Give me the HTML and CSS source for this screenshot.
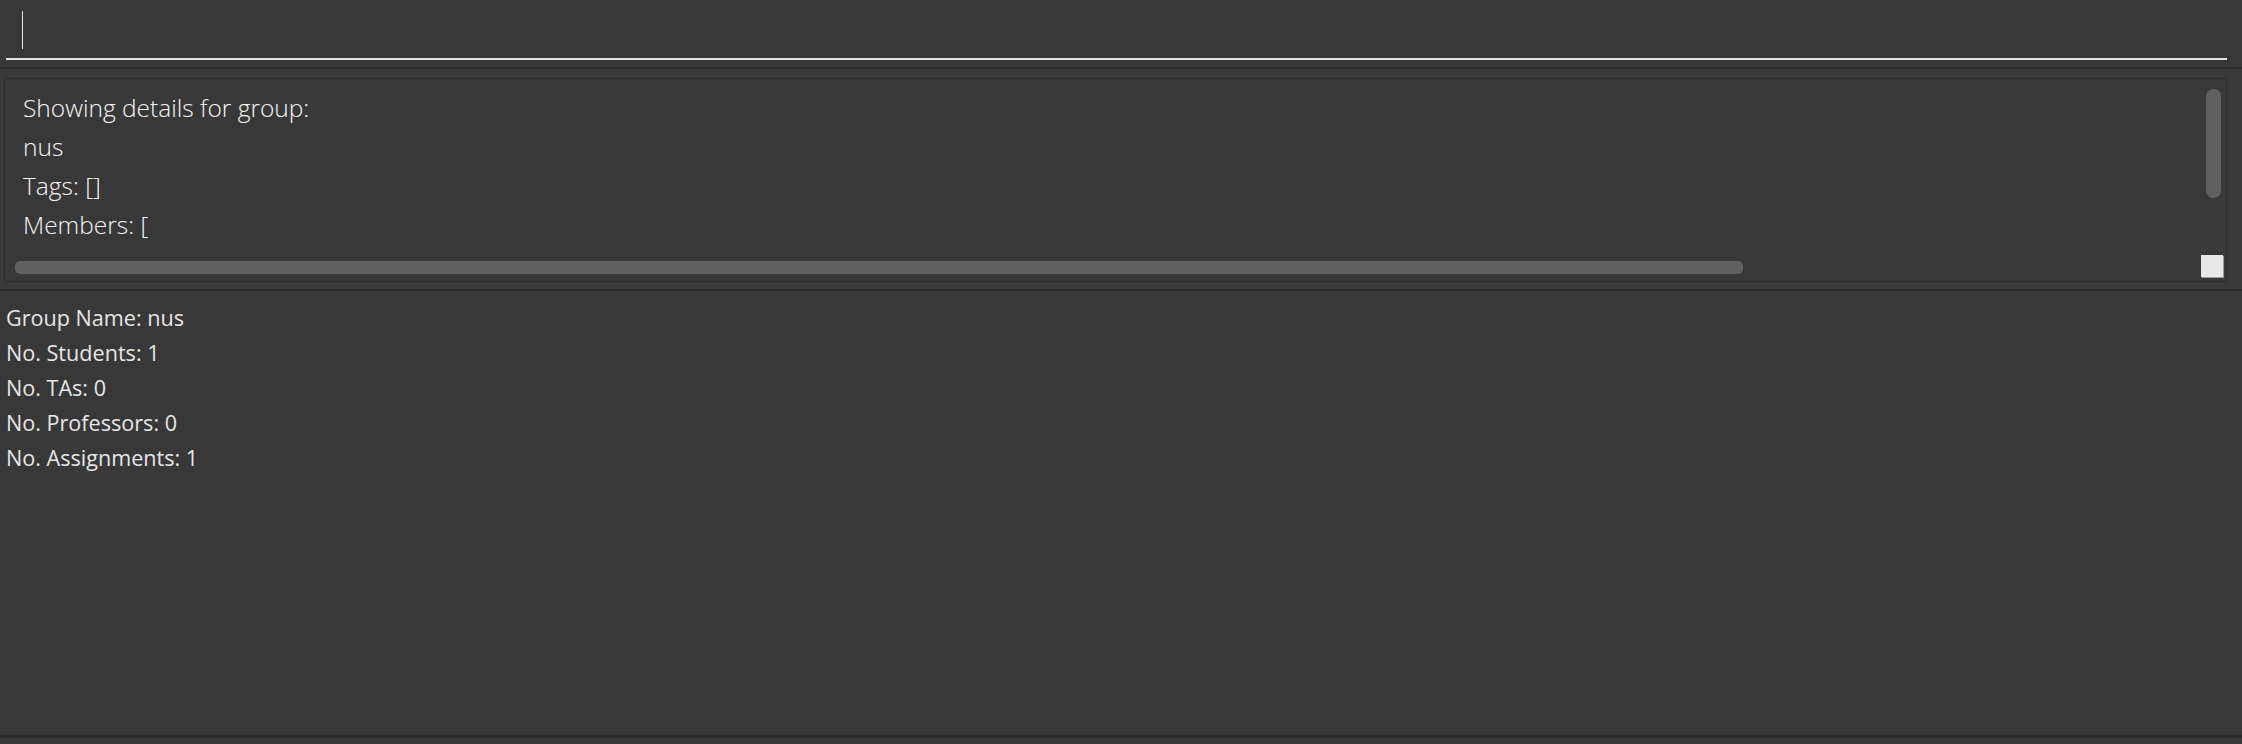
FILE: index.html
```html
<!DOCTYPE html>
<html lang="en">
<head>
<meta charset="utf-8">
<title>Group details</title>
<link rel="stylesheet" href="styles.css">
</head>
<body>
<div class="app">
  <section class="command-box">
    <div class="command-input"><span class="caret"></span></div>
  </section>
  <div class="divider"></div>
  <section class="result-section">
    <div class="result-panel">
      <div class="viewport">
        <p class="result-line">Showing details for group:</p>
        <p class="result-line">nus</p>
        <p class="result-line">Tags: []</p>
        <p class="result-line">Members: [</p>
      </div>
      <div class="vtrack"><div class="vthumb"></div></div>
      <div class="htrack"><div class="hthumb"></div></div>
      <div class="corner"></div>
    </div>
  </section>
  <div class="divider"></div>
  <section class="details">
    <p class="detail-line">Group Name: nus</p>
    <p class="detail-line">No. Students: 1</p>
    <p class="detail-line">No. TAs: 0</p>
    <p class="detail-line">No. Professors: 0</p>
    <p class="detail-line">No. Assignments: 1</p>
  </section>
  <div class="divider divider-bottom"></div>
</div>
</body>
</html>
```

FILE: styles.css
```css
html, body {
  margin: 0;
  padding: 0;
  background: #383838;
  overflow: hidden;
}

body {
  width: 2242px;
  height: 744px;
  font-family: "Open Sans", "Noto Sans", sans-serif;
}

.app {
  display: flex;
  flex-direction: column;
  height: 744px;
}

.command-box {
  height: 67px;
  box-sizing: border-box;
  padding: 0 15px 0 6px;
  flex: none;
}

.command-input {
  height: 60px;
  box-sizing: border-box;
  border-bottom: 2px solid #e2e2e2;
  padding: 11px 0 0 16px;
}

.caret {
  display: block;
  width: 1px;
  height: 38px;
  background: #e8e8e8;
}

.divider {
  flex: none;
  height: 2px;
  background: #2c2c2c;
}

.result-section {
  flex: none;
  height: 220px;
  box-sizing: border-box;
  padding: 9px 15px 7px 4px;
}

.result-panel {
  height: 204px;
  box-sizing: border-box;
  border: 1px solid #2b2b2b;
  display: grid;
  grid-template-columns: 1fr 22px;
  grid-template-rows: 1fr 22px;
  padding: 0 3px 4px 0;
}

.viewport {
  overflow: hidden;
  padding: 9px 0 0 18px;
}

.result-line {
  margin: 0;
  font-size: 24.5px;
  font-weight: 300;
  line-height: 39px;
  color: #f6f6f6;
  white-space: nowrap;
}

.vtrack {
  padding: 10px 2px 0 5px;
}

.vthumb {
  height: 109px;
  border-radius: 7px;
  background: #5f5f5f;
}

.htrack {
  padding: 6px 0 0 10px;
}

.hthumb {
  width: 1728px;
  height: 13px;
  border-radius: 5px;
  background: #616161;
}

.corner {
  background: #e8e8e8;
  box-shadow: 1px 1px 0 #9a9a9a;
}

.details {
  flex: 1;
  padding: 9px 0 0 6px;
}

.detail-line {
  margin: 0;
  font-size: 21.6px;
  line-height: 35px;
  color: #e6e6e6;
}

.divider-bottom {
  height: 3px;
  background: #2d2d2d;
  margin-bottom: 6px;
}
```
